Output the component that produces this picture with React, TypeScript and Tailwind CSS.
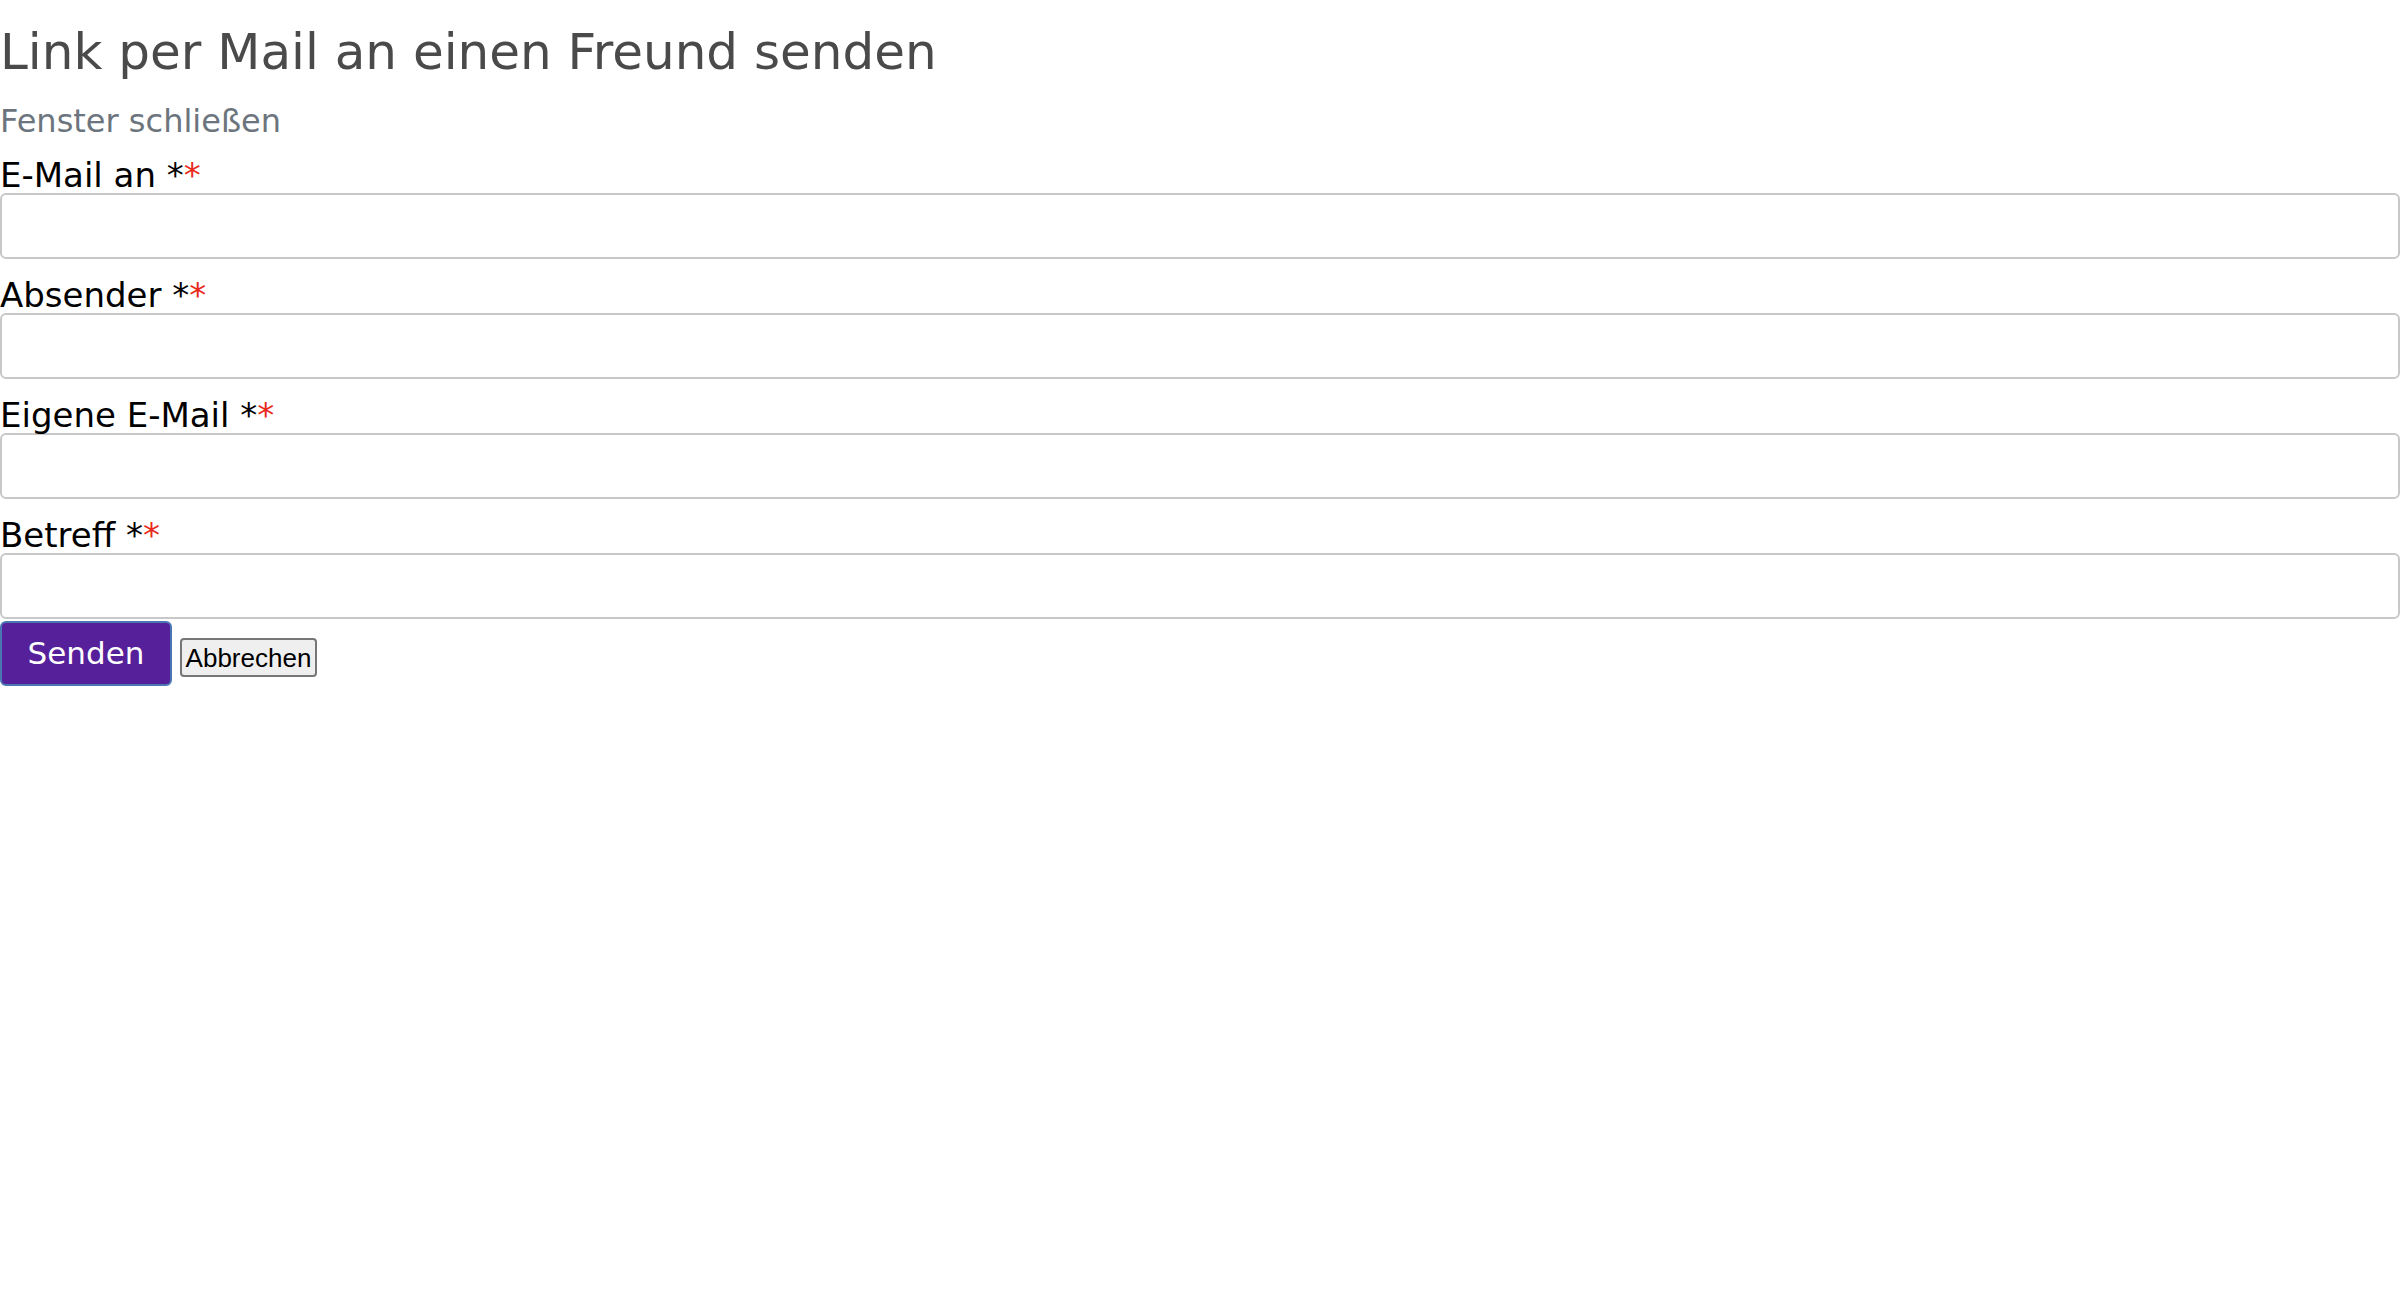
import { useState } from "react";

const fields = [
  { id: "to", label: "E-Mail an *", type: "email" },
  { id: "sender", label: "Absender *", type: "text" },
  { id: "own", label: "Eigene E-Mail *", type: "email" },
  { id: "subject", label: "Betreff *", type: "text" },
];

export default function App() {
  const [values, setValues] = useState<Record<string, string>>({});

  return (
    <main className="min-h-screen bg-white font-['DejaVu_Sans',_'Liberation_Sans',_sans-serif]">
      <h1 className="mt-[22px] text-[50px] leading-[60px] font-normal text-[#4a4a4a]">
        Link per Mail an einen Freund senden
      </h1>

      <a href="#" className="mt-[21px] mb-[6px] block text-[32px] leading-[36px] text-[#6c757d]">
        Fenster schließen
      </a>

      <form onSubmit={(e) => e.preventDefault()}>
        {fields.map((f) => (
          <div key={f.id}>
            <label
              htmlFor={f.id}
              className="mt-[18px] block text-[34px] leading-[36px] text-black"
            >
              {f.label}
              <span className="text-[#e8291c]">*</span>
            </label>
            <input
              id={f.id}
              type={f.type}
              value={values[f.id] ?? ""}
              onChange={(e) => setValues({ ...values, [f.id]: e.target.value })}
              className="block h-[66px] w-full rounded-[6px] border-2 border-[#c8c8c8] bg-white px-3 text-[30px] outline-none"
            />
          </div>
        ))}

        <div className="mt-[2px] flex items-start">
          <button
            type="submit"
            className="h-[65px] w-[172px] rounded-[6px] border-2 border-[#4a76b4] bg-[#55209a] text-[31px] text-white"
          >
            Senden
          </button>
          <button
            type="button"
            className="mt-[17px] ml-[8px] h-[39px] w-[137px] rounded-[4px] border-2 border-[#767676] bg-[#efefef] font-['Liberation_Sans',_Arial,_sans-serif] text-[26px] leading-none text-black"
          >
            Abbrechen
          </button>
        </div>
      </form>
    </main>
  );
}
